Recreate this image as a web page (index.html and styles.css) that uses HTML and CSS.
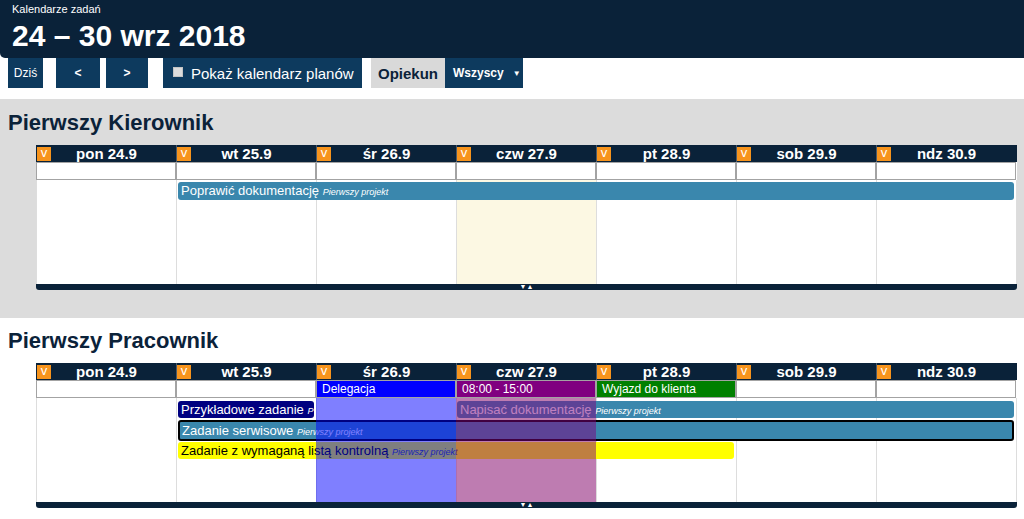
FILE: index.html
```html
<!DOCTYPE html>
<html lang="pl">
<head>
<meta charset="utf-8">
<title>Kalendarze zadań</title>
<link rel="stylesheet" href="styles.css">
</head>
<body>
<header class="top">
  <div class="app-name">Kalendarze zadań</div>
  <h1 class="range">24 – 30 wrz 2018</h1>
</header>
<nav class="toolbar">
  <button class="btn btn-today">Dziś</button>
  <button class="btn btn-prev">&lt;</button>
  <button class="btn btn-next">&gt;</button>
  <label class="btn btn-check"><span class="checkbox"></span>Pokaż kalendarz planów</label>
  <span class="filter-label">Opiekun</span>
  <button class="btn btn-select">Wszyscy<span class="caret">▼</span></button>
</nav>

<section class="person person-active">
  <h2 class="person-name">Pierwszy Kierownik</h2>
  <div class="week">
    <div class="days">
      <div class="day"><span class="v">v</span><span class="day-label">pon 24.9</span></div>
      <div class="day"><span class="v">v</span><span class="day-label">wt 25.9</span></div>
      <div class="day"><span class="v">v</span><span class="day-label">śr 26.9</span></div>
      <div class="day"><span class="v">v</span><span class="day-label">czw 27.9</span></div>
      <div class="day"><span class="v">v</span><span class="day-label">pt 28.9</span></div>
      <div class="day"><span class="v">v</span><span class="day-label">sob 29.9</span></div>
      <div class="day"><span class="v">v</span><span class="day-label">ndz 30.9</span></div>
    </div>
    <div class="allday">
      <div class="slot"></div><div class="slot"></div><div class="slot"></div><div class="slot"></div><div class="slot"></div><div class="slot"></div><div class="slot"></div>
    </div>
    <div class="grid">
      <div class="col c1"></div><div class="col c2"></div><div class="col c3"></div><div class="col c4 today"></div><div class="col c5"></div><div class="col c6"></div><div class="col c7"></div>
      <div class="ev ev-blue k1">Poprawić dokumentację <span class="proj">Pierwszy projekt</span></div>
    </div>
    <div class="foot">▼▲</div>
  </div>
</section>

<section class="person">
  <h2 class="person-name">Pierwszy Pracownik</h2>
  <div class="week">
    <div class="days">
      <div class="day"><span class="v">v</span><span class="day-label">pon 24.9</span></div>
      <div class="day"><span class="v">v</span><span class="day-label">wt 25.9</span></div>
      <div class="day"><span class="v">v</span><span class="day-label">śr 26.9</span></div>
      <div class="day"><span class="v">v</span><span class="day-label">czw 27.9</span></div>
      <div class="day"><span class="v">v</span><span class="day-label">pt 28.9</span></div>
      <div class="day"><span class="v">v</span><span class="day-label">sob 29.9</span></div>
      <div class="day"><span class="v">v</span><span class="day-label">ndz 30.9</span></div>
    </div>
    <div class="allday">
      <div class="slot"></div>
      <div class="slot"></div>
      <div class="slot slot-blue">Delegacja</div>
      <div class="slot slot-purple">08:00 - 15:00</div>
      <div class="slot slot-green">Wyjazd do klienta</div>
      <div class="slot"></div>
      <div class="slot"></div>
    </div>
    <div class="grid">
      <div class="col c1"></div><div class="col c2"></div><div class="col c3"></div><div class="col c4 today"></div><div class="col c5"></div><div class="col c6"></div><div class="col c7"></div>
      <div class="ev ev-navy p1">Przykładowe zadanie <span class="proj">P</span></div>
      <div class="ev ev-blue p2">Napisać dokumentację <span class="proj">Pierwszy projekt</span></div>
      <div class="ev ev-blue ev-outlined p3">Zadanie serwisowe <span class="proj">Pierwszy projekt</span></div>
      <div class="ev ev-yellow p4">Zadanie z wymaganą listą kontrolną <span class="proj">Pierwszy projekt</span></div>
      <div class="bg-ev bg-blue"></div>
      <div class="bg-ev bg-purple"></div>
    </div>
    <div class="foot">▼▲</div>
  </div>
</section>
</body>
</html>
```

FILE: styles.css
```css
* { box-sizing: border-box; }

body {
  margin: 0;
  font-family: "Liberation Sans", Arial, sans-serif;
  background: #fff;
  color: #0b2239;
}

.top {
  background: #0a2239;
  color: #fff;
  height: 58px;
  padding: 2px 12px 0;
  border-bottom-left-radius: 5px;
}
.app-name {
  font-size: 11px;
  line-height: 14px;
}
.range {
  margin: 3px 0 0;
  font-size: 30px;
  line-height: 34px;
  font-weight: bold;
}

.toolbar {
  display: flex;
  align-items: stretch;
  height: 30px;
  padding-left: 8px;
}
.btn {
  border: 0;
  margin: 0;
  padding: 0;
  background: #0d3a5e;
  color: #fff;
  font-family: "Liberation Sans", Arial, sans-serif;
  font-size: 12px;
  display: flex;
  align-items: center;
  justify-content: center;
  height: 30px;
}
.btn-today { width: 35px; }
.btn-prev { width: 44px; margin-left: 13px; font-weight: bold; }
.btn-next { width: 42px; margin-left: 6px; font-weight: bold; }
.btn-check {
  margin-left: 15px;
  width: 199px;
  font-size: 15px;
  justify-content: flex-start;
  padding-left: 10px;
}
.checkbox {
  display: inline-block;
  width: 10px;
  height: 10px;
  background: #dcdcdc;
  border: 1px solid #c4c4c4;
  margin-right: 8px;
  margin-top: -2px;
}
.filter-label {
  margin-left: 9px;
  width: 74px;
  background: #d9d9d9;
  color: #0b2239;
  font-size: 15px;
  font-weight: bold;
  display: flex;
  align-items: center;
  justify-content: center;
}
.btn-select {
  width: 78px;
  font-weight: bold;
  justify-content: flex-start;
  padding-left: 8px;
}
.caret {
  font-size: 8px;
  margin-left: 9px;
}

.person {
  padding: 11px 0 28px;
}
.person-active {
  margin-top: 11px;
  padding-top: 12px;
  background: #dcdcdc;
}
.person-name {
  margin: 0 0 10px 8px;
  font-size: 22px;
  line-height: 24px;
  font-weight: bold;
  color: #0b2239;
}

.week {
  margin-left: 36px;
  width: 981px;
}
.days {
  display: grid;
  grid-template-columns: repeat(7, 140px) 1px;
  background: #0a2239;
  height: 17px;
}
.day {
  display: flex;
  align-items: center;
  border-left: 1px solid #4a5a6a;
  color: #fff;
}
.day:first-child { border-left-color: #0a2239; }
.v {
  width: 14px;
  height: 14px;
  background: #f7941d;
  color: #fff;
  font-size: 13px;
  line-height: 11px;
  text-align: center;
}
.day-label {
  flex: 1;
  text-align: center;
  margin-right: 14px;
  font-size: 15px;
  font-weight: bold;
  line-height: 17px;
}

.allday {
  display: grid;
  grid-template-columns: repeat(7, 140px) 1px;
  height: 18px;
  background: #fff;
}
.slot {
  border: 1px solid #a3a3a3;
  background: #fff;
  color: #fff;
  font-size: 12px;
  line-height: 16px;
  padding-left: 5px;
  white-space: nowrap;
  overflow: hidden;
}
.slot-blue { background: #0000ff; }
.slot-purple { background: #800080; }
.slot-green { background: #008000; }

.grid {
  display: grid;
  grid-template-columns: repeat(7, 140px) 1px;
  grid-template-rows: auto auto auto 1fr;
  height: 104px;
  background: #fff;
  border-right: 1px solid #ddd;
}
.col {
  grid-row: 1 / -1;
  border-left: 1px solid #ddd;
}
.c1 { grid-column: 1; }
.c2 { grid-column: 2; }
.c3 { grid-column: 3; }
.c4 { grid-column: 4; }
.c5 { grid-column: 5; }
.c6 { grid-column: 6; }
.c7 { grid-column: 7; }
.today { background: #fcf8e3; }

.ev {
  height: 18px;
  line-height: 18px;
  font-size: 13px;
  color: #fff;
  border-radius: 3px;
  white-space: nowrap;
  overflow: hidden;
  padding-left: 3px;
  z-index: 1;
}
.proj {
  font-size: 9px;
  font-style: italic;
}
.ev-blue { background: #3a87ad; }
.ev-navy { background: #000080; }
.ev-yellow { background: #ffff00; color: #000; }
.ev-yellow .proj { color: #3a4a6a; }
.ev-outlined {
  border: 2px solid #000;
  height: 21px;
  line-height: 17px;
  padding-left: 2px;
}

.k1 { grid-row: 1; grid-column: 2 / 8; margin: 2px 2px 0 2px; }
.p1 { grid-row: 1; grid-column: 2 / 3; margin: 3px 2px 0 2px; height: 17px; line-height: 17px; }
.p2 { grid-row: 1; grid-column: 4 / 8; margin: 3px 2px 0 1px; height: 17px; line-height: 17px; }
.p3 { grid-row: 2; grid-column: 2 / 8; margin: 2px 2px 0 2px; }
.p4 { grid-row: 3; grid-column: 2 / 6; margin: 1px 2px 0 2px; height: 17px; line-height: 17px; }

.bg-ev {
  grid-row: 1 / -1;
  z-index: 2;
}
.bg-blue { grid-column: 3; background: rgba(0, 0, 255, 0.5); }
.bg-purple { grid-column: 4; background: rgba(128, 0, 128, 0.5); }

.foot {
  height: 6px;
  background: #0a2239;
  border-radius: 0 0 3px 3px;
  color: #fff;
  font-size: 7px;
  line-height: 6px;
  text-align: center;
}
```
